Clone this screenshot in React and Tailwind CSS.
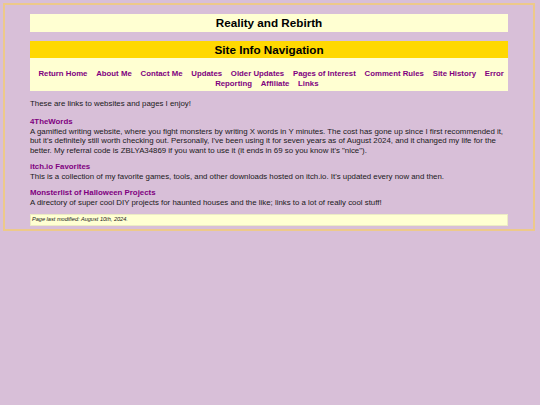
import React from 'react';

const navLinks = [
  'Return Home',
  'About Me',
  'Contact Me',
  'Updates',
  'Older Updates',
  'Pages of Interest',
  'Comment Rules',
  'Site History',
  'Error Reporting',
  'Affiliate',
  'Links',
];

const sites = [
  {
    name: '4TheWords',
    text: 'A gamified writing website, where you fight monsters by writing X words in Y minutes. The cost has gone up since I first recommended it, but it\'s definitely still worth checking out. Personally, I\'ve been using it for seven years as of August 2024, and it changed my life for the better. My referral code is ZBLYA34869 if you want to use it (it ends in 69 so you know it\'s "nice").',
  },
  {
    name: 'itch.io Favorites',
    text: "This is a collection of my favorite games, tools, and other downloads hosted on itch.io. It's updated every now and then.",
  },
  {
    name: 'Monsterlist of Halloween Projects',
    text: 'A directory of super cool DIY projects for haunted houses and the like; links to a lot of really cool stuff!',
  },
];

export default function App() {
  return (
    <div className="min-h-[405px] w-[540px] bg-[#d8bfd8] pt-[3px] font-['Liberation_Sans',Arial,sans-serif] text-[#1a1a1a]">
      <div className="ml-[3px] w-[532px] border-2 border-[#edc98a] pt-[9px] pb-[3px]">
        <div className="mx-auto w-[478px]">
          <div className="flex h-[18px] items-center justify-center bg-[#ffffd2]">
            <h1 className="text-[11.7px] font-bold leading-none text-black">Reality and Rebirth</h1>
          </div>

          <div className="mt-[9px] flex h-[17px] items-center justify-center bg-[#ffd800]">
            <h2 className="text-[11.7px] font-bold leading-none text-black">Site Info Navigation</h2>
          </div>
          <nav className="bg-[#ffffd2] px-[3px] pt-[11px] pb-[2px] text-center text-[7.8px] font-bold leading-[10px] text-[#800080]">
            {navLinks.map(link => (
              <a key={link} href="#" className="mx-[4.4px]">
                {link}
              </a>
            ))}
          </nav>

          <div className="text-[7.85px] leading-[9.5px]">
            <p className="mt-[8px]">These are links to websites and pages I enjoy!</p>
            {sites.map((site, i) => (
              <div key={site.name} className={i === 0 ? 'mt-[8.5px]' : 'mt-[7px]'}>
                <a href="#" className="block font-bold text-[#800080]">
                  {site.name}
                </a>
                <p>{site.text}</p>
              </div>
            ))}
          </div>

          <div className="mt-[7px] flex h-[12px] items-center border border-[#ecebc4] bg-[#ffffd2] px-[1px]">
            <span className="text-[5.6px] italic leading-none">Page last modified: August 10th, 2024.</span>
          </div>
        </div>
      </div>
    </div>
  );
}
